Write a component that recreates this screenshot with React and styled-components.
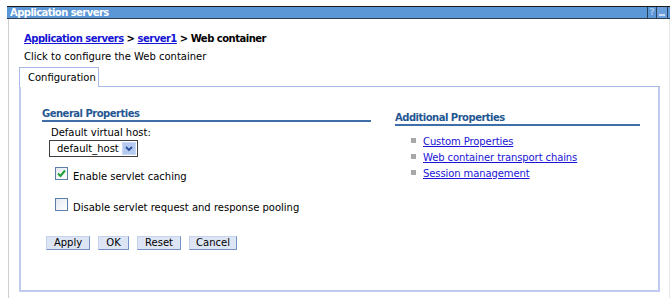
import React from 'react';
import styled, { createGlobalStyle } from 'styled-components';

const Global = createGlobalStyle`
  html, body { margin: 0; padding: 0; background: #fff; }
  body {
    font-family: "DejaVu Sans", Verdana, sans-serif;
    font-size: 10px;
    color: #000;
  }
`;

const Page = styled.div`
  width: 672px;
  height: 302px;
  box-sizing: border-box;
  padding: 6px 2px 0 7px;
  overflow: hidden;
`;

const TitleBar = styled.div`
  display: flex;
  align-items: center;
  height: 11px;
  border-top: 1px solid #1a1a1a;
  border-bottom: 1px solid #2c3c50;
  background: #5b96d6;
  color: #fff;
  font-weight: bold;
  font-size: 10px;
  line-height: 11px;
  padding-left: 3px;
`;

const TitleText = styled.span`
  flex: 1;
  letter-spacing: -0.55px;
`;

const TitleIcon = styled.span`
  display: flex;
  align-items: center;
  justify-content: center;
  width: ${p => p.w}px;
  height: 11px;
  color: #a9c8ee;
  font-size: 9px;
  font-weight: bold;
  border-left: 1px solid #27405e;
  background: ${p => p.bg || 'transparent'};
`;

const Body = styled.div`
  margin-left: 1px;
  border-left: 1px solid #cfcfcf;
  border-right: 1px solid #e6e6e6;
  height: 279px;
  box-sizing: border-box;
  padding: 14px 10px 0 10px;
`;

const Crumbs = styled.div`
  padding-left: 5px;
  font-weight: bold;
  line-height: 12px;
  letter-spacing: -0.5px;
`;

const CrumbLink = styled.a`
  color: #1414d4;
  text-decoration: underline;
  cursor: pointer;
`;

const Description = styled.div`
  padding-left: 5px;
  margin-top: 6px;
  line-height: 12px;
`;

const TabStrip = styled.div`
  display: flex;
  margin-top: 4px;
  width: 641px;
`;

const Tab = styled.div`
  width: 80px;
  height: 20px;
  box-sizing: border-box;
  border: 1px solid #a9bbe6;
  border-bottom: none;
  padding-left: 8px;
  display: flex;
  align-items: center;
`;

const TabFiller = styled.div`
  flex: 1;
  border-bottom: 1px solid #a9bbe6;
`;

const Panel = styled.div`
  width: 641px;
  height: 205px;
  box-sizing: border-box;
  border: 2px solid #bfcaee;
  border-top: none;
  padding: 21px 18px 0 21px;
  display: flex;
  gap: 24px;
  align-items: flex-start;
`;

const Column = styled.div`
  width: ${p => p.w}px;
  margin-top: ${p => p.top || 0}px;
  display: flex;
  flex-direction: column;
  align-items: flex-start;
`;

const Heading = styled.div`
  align-self: stretch;
  color: #245792;
  font-weight: bold;
  line-height: 12px;
  border-bottom: 2px solid #3f6fa8;
  letter-spacing: -0.5px;
`;

const FieldLabel = styled.div`
  margin: 5px 0 0 9px;
  line-height: 12px;
`;

const SelectBox = styled.div`
  margin: 1px 0 0 7px;
  width: 89px;
  height: 17px;
  box-sizing: border-box;
  border: 1px solid #3f3f3f;
  display: flex;
  align-items: center;
  justify-content: space-between;
  padding: 0 1px 0 7px;
`;

const SelectArrow = styled.span`
  width: 14px;
  height: 13px;
  background: #b4caf0;
  border: 1px solid #c9d8f4;
  box-sizing: border-box;
  display: flex;
  align-items: center;
  justify-content: center;
`;

const CheckRow = styled.div`
  display: flex;
  align-items: flex-start;
  gap: 5px;
  margin: ${p => p.top}px 0 0 13px;
`;

const Box = styled.span`
  width: 13px;
  height: 13px;
  box-sizing: border-box;
  border: 1px solid #5b7fa8;
  background: linear-gradient(135deg, #e4e9f0, #fff);
  display: flex;
  align-items: center;
  justify-content: center;
`;

const CheckLabel = styled.span`
  padding-top: 4px;
  line-height: 12px;
`;

const Buttons = styled.div`
  display: flex;
  gap: 8px;
  margin: 22px 0 0 4px;
`;

const Button = styled.button`
  font-family: "DejaVu Sans", Verdana, sans-serif;
  font-size: 10px;
  width: ${p => p.w}px;
  height: 14px;
  line-height: 12px;
  padding: 0;
  background: #dde5f4;
  color: #000;
  border: 1px solid;
  border-color: #c6d3ec #7392c6 #7392c6 #c6d3ec;
  cursor: pointer;
`;

const LinkList = styled.ul`
  list-style: none;
  margin: 7px 0 0 16px;
  padding: 0;
`;

const LinkItem = styled.li`
  display: flex;
  align-items: center;
  gap: 7px;
  height: 16px;
`;

const Bullet = styled.span`
  width: 5px;
  height: 5px;
  background: #a7a7a7;
  margin-top: -2px;
`;

const PropLink = styled.a`
  color: #1a14d6;
  text-decoration: underline;
  cursor: pointer;
  letter-spacing: -0.1px;
`;

export default function App() {
  return (
    <>
      <Global />
      <Page>
        <TitleBar>
          <TitleText>Application servers</TitleText>
          <TitleIcon w={8}>?</TitleIcon>
          <TitleIcon w={10} bg="#6a9fdc">
            <svg width="6" height="6" viewBox="0 0 6 6">
              <rect x="0" y="4" width="6" height="2" fill="#c9dcf3" />
            </svg>
          </TitleIcon>
          <TitleIcon w={2} />
        </TitleBar>
        <Body>
          <Crumbs>
            <CrumbLink>Application servers</CrumbLink> &gt; <CrumbLink>server1</CrumbLink> &gt; Web container
          </Crumbs>
          <Description>Click to configure the Web container</Description>
          <TabStrip>
            <Tab>Configuration</Tab>
            <TabFiller />
          </TabStrip>
          <Panel>
            <Column w={329}>
              <Heading>General Properties</Heading>
              <FieldLabel>Default virtual host:</FieldLabel>
              <SelectBox>
                <span>default_host</span>
                <SelectArrow>
                  <svg width="8" height="6" viewBox="0 0 8 6">
                    <polyline points="1,1 4,4 7,1" fill="none" stroke="#2a4f9a" strokeWidth="1.8" />
                  </svg>
                </SelectArrow>
              </SelectBox>
              <CheckRow top={10}>
                <Box>
                  <svg width="9" height="9" viewBox="0 0 9 9">
                    <polyline points="1,4.5 3.5,7 8,1.5" fill="none" stroke="#21a236" strokeWidth="2" />
                  </svg>
                </Box>
                <CheckLabel>Enable servlet caching</CheckLabel>
              </CheckRow>
              <CheckRow top={15}>
                <Box />
                <CheckLabel>Disable servlet request and response pooling</CheckLabel>
              </CheckRow>
              <Buttons>
                <Button w={44}>Apply</Button>
                <Button w={31}>OK</Button>
                <Button w={44}>Reset</Button>
                <Button w={48}>Cancel</Button>
              </Buttons>
            </Column>
            <Column w={245} top={4}>
              <Heading>Additional Properties</Heading>
              <LinkList>
                <LinkItem><Bullet /><PropLink>Custom Properties</PropLink></LinkItem>
                <LinkItem><Bullet /><PropLink>Web container transport chains</PropLink></LinkItem>
                <LinkItem><Bullet /><PropLink>Session management</PropLink></LinkItem>
              </LinkList>
            </Column>
          </Panel>
        </Body>
      </Page>
    </>
  );
}
